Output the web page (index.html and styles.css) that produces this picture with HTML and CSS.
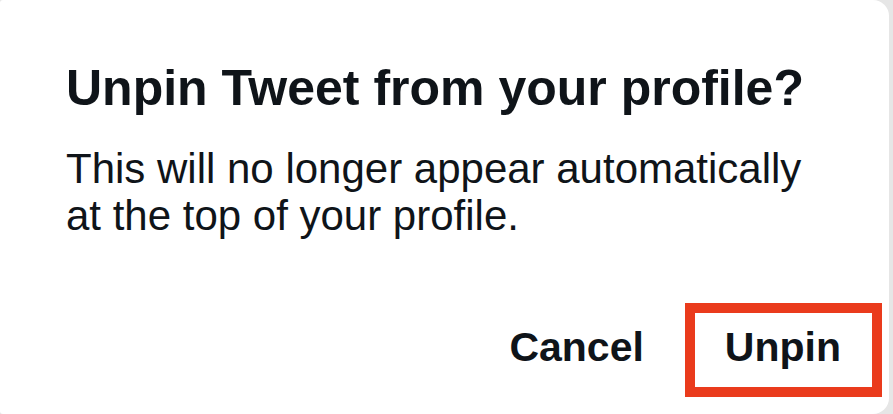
FILE: index.html
```html
<!DOCTYPE html>
<html lang="en">

<head>
    <meta charset="UTF-8">
    <meta name="viewport" content="width=device-width, initial-scale=1.0">
    <title>Unpin Tweet</title>
    <link rel="stylesheet" href="styles.css">
</head>

<body>
    <div class="dialog">
        <h2>Unpin Tweet from your profile?</h2>
        <p class="message">This will no longer appear automatically<br>at the top of your profile.</p>
        <div class="actions">
            <button class="cancel">Cancel</button>
            <button class="confirm">Unpin</button>
        </div>
    </div>
</body>

</html>
```

FILE: styles.css
```css
body {
    margin: 0;
    font-family: "Liberation Sans", Arial, sans-serif;
    background-color: #e6e6e6;
    width: 893px;
    height: 414px;
    overflow: hidden;
}

.dialog {
    box-sizing: border-box;
    width: 889px;
    height: 414px;
    background-color: white;
    border-radius: 3px 16px 16px 3px;
    padding: 58px 7px 0 66px;
    color: #0f1419;
}

h2 {
    margin: 0;
    font-size: 50px;
    line-height: 60px;
    font-weight: bold;
}

.message {
    margin: 27px 0 0;
    font-size: 42px;
    line-height: 47px;
}

.actions {
    display: flex;
    justify-content: flex-end;
    align-items: center;
    gap: 41px;
    margin-top: 64px;
}

button {
    font-family: inherit;
    font-size: 41px;
    font-weight: bold;
    line-height: 49px;
    color: #0f1419;
    background: none;
    border: none;
    cursor: pointer;
}

.cancel {
    padding: 10px 0 15px;
}

.confirm {
    padding: 10px 31px 15px 30px;
    border: 10px solid #ea3b1c;
}
```
